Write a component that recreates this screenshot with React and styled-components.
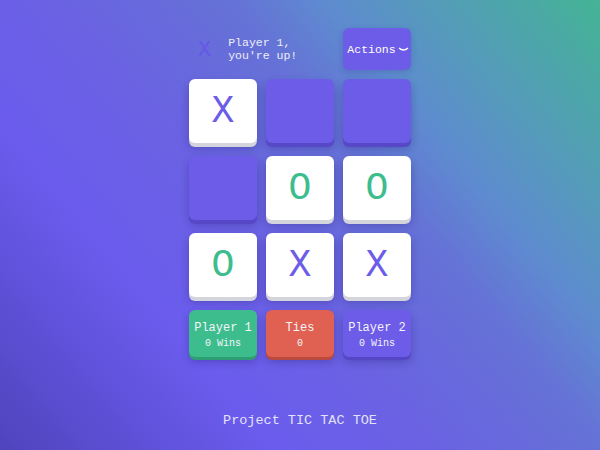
import React from "react";
import styled, { createGlobalStyle } from "styled-components";

const GlobalStyle = createGlobalStyle`
  html, body {
    margin: 0;
    padding: 0;
  }
  body {
    font-family: "Liberation Mono", "Courier New", monospace;
  }
`;

const board = ["X", "", "", "", "O", "O", "O", "X", "X"];

function App() {
  return (
    <Page>
      <GlobalStyle />
      <Game>
        <Header>
          <Turn>
            <TurnMark>X</TurnMark>
            <TurnText>
              Player 1,
              <br />
              you're up!
            </TurnText>
          </Turn>
          <ActionsButton>
            Actions
            <svg width="11" height="6" viewBox="0 0 11 6">
              <path d="M1 1 Q5.5 5 10 1" fill="none" stroke="#fff" strokeWidth="1.3" />
            </svg>
          </ActionsButton>
        </Header>
        <Board>
          {board.map((v, i) => (
            <Cell key={i} $filled={v !== ""}>
              {v && <Mark $o={v === "O"}>{v}</Mark>}
            </Cell>
          ))}
        </Board>
        <Scores>
          <Score $bg="#3dbd8e" $shade="#2f9d74">
            <ScoreTitle>Player 1</ScoreTitle>
            <ScoreValue>0 Wins</ScoreValue>
          </Score>
          <Score $bg="#e06152" $shade="#b94a3e">
            <ScoreTitle>Ties</ScoreTitle>
            <ScoreValue>0</ScoreValue>
          </Score>
          <Score $bg="#6c5ce7" $shade="#5547c4">
            <ScoreTitle>Player 2</ScoreTitle>
            <ScoreValue>0 Wins</ScoreValue>
          </Score>
        </Scores>
      </Game>
      <Footer>Project TIC TAC TOE</Footer>
    </Page>
  );
}

export default App;

const Page = styled.div`
  width: 100%;
  height: 450px;
  box-sizing: border-box;
  display: flex;
  flex-direction: column;
  align-items: center;
  padding-top: 28px;
  background: linear-gradient(
    50deg,
    #5044bd 0%,
    #6b5cee 28%,
    #6a62e2 45%,
    #6572d6 62%,
    #5e8ccf 72%,
    #44b495 100%
  );
  overflow: hidden;
`;

const Game = styled.div`
  width: 222px;
  display: flex;
  flex-direction: column;
`;

const Header = styled.div`
  height: 42px;
  display: flex;
  align-items: center;
  justify-content: space-between;
  margin-bottom: 9px;
`;

const Turn = styled.div`
  display: flex;
  align-items: center;
  gap: 17px;
  padding-left: 9px;
`;

const TurnMark = styled.span`
  font-size: 22px;
  color: #6657e8;
  line-height: 1;
  margin-top: 3px;
`;

const TurnText = styled.div`
  font-size: 11.5px;
  line-height: 13px;
  color: #eeeefa;
  margin-top: 0;
`;

const ActionsButton = styled.button`
  width: 68px;
  height: 42px;
  border: none;
  border-radius: 6px;
  background: #6c5ce7;
  color: #fff;
  font-family: "Liberation Mono", monospace;
  font-size: 11.5px;
  padding: 0 0 0 2px;
  display: flex;
  align-items: center;
  justify-content: center;
  gap: 2px;
  box-shadow: 0 2px 6px rgba(40, 30, 120, 0.2);

  svg {
    margin-top: 1px;
  }
`;

const Board = styled.div`
  display: grid;
  grid-template-columns: repeat(3, 68px);
  grid-auto-rows: 64px;
  column-gap: 9px;
  row-gap: 13px;
`;

const Cell = styled.div`
  border-radius: 6px;
  background: ${(p) => (p.$filled ? "#ffffff" : "#6c5ce7")};
  box-shadow: 0 4px 0 ${(p) => (p.$filled ? "#d4d4dc" : "#5748c8")},
    0 5px 8px rgba(30, 20, 100, 0.3);
  display: flex;
  align-items: center;
  justify-content: center;
`;

const Mark = styled.span`
  font-family: "Liberation Mono", monospace;
  font-size: 38px;
  line-height: 1;
  color: ${(p) => (p.$o ? "#3dbd8e" : "#6c5ce7")};
  margin-top: 2px;
`;

const Scores = styled.div`
  display: grid;
  grid-template-columns: repeat(3, 68px);
  column-gap: 9px;
  margin-top: 13px;
`;

const Score = styled.div`
  height: 47px;
  border-radius: 6px;
  background: ${(p) => p.$bg};
  box-shadow: 0 3px 0 ${(p) => p.$shade}, 0 5px 8px rgba(30, 20, 100, 0.3);
  color: #f4f4fb;
  display: flex;
  flex-direction: column;
  align-items: center;
  justify-content: center;
  gap: 3px;
  padding-top: 2px;
  box-sizing: border-box;
`;

const ScoreTitle = styled.div`
  font-size: 12px;
`;

const ScoreValue = styled.div`
  font-size: 10px;
`;

const Footer = styled.div`
  margin-top: 56px;
  font-size: 13.5px;
  color: #e4e2f8;
`;
